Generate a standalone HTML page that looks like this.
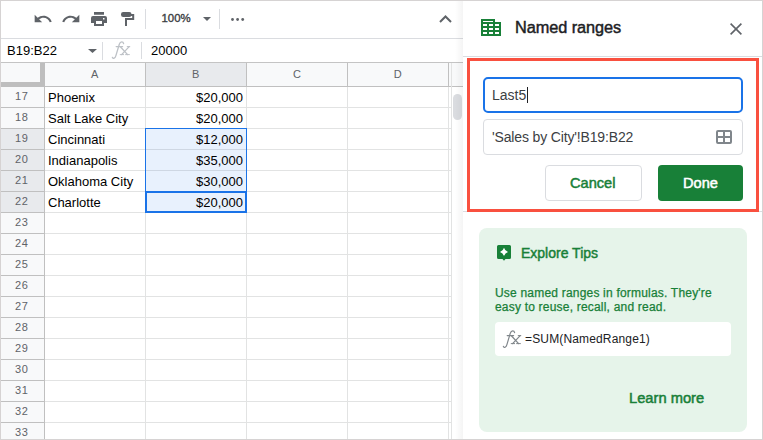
<!DOCTYPE html>
<html><head><meta charset="utf-8">
<style>
*{margin:0;padding:0;box-sizing:border-box}
html,body{width:763px;height:440px;overflow:hidden;background:#fff}
body{position:relative;font-family:"Liberation Sans",sans-serif}
.a{position:absolute}
.t{position:absolute;white-space:nowrap;line-height:1}
.rn{position:absolute;left:0.2px;width:43px;height:20px;line-height:18px;text-align:center;font-size:11px;letter-spacing:0.5px;color:#5f6368}
.ca{position:absolute;left:48px;height:20px;line-height:22px;font-size:13px;color:#000;white-space:nowrap}
.cb{position:absolute;left:146px;width:97px;height:20px;line-height:22px;font-size:13px;color:#000;text-align:right;white-space:nowrap}
</style></head><body>

<!-- ===== toolbar ===== -->
<div class="a" style="left:0;top:38px;width:463px;height:1px;background:#dadce0"></div>
<!-- undo -->
<svg class="a" style="left:33px;top:9px" width="20" height="20" viewBox="0 0 24 24"><path fill="#5f6368" d="M12.5 8c-2.65 0-5.05.99-6.9 2.6L2 7v9h9l-3.62-3.62c1.39-1.16 3.16-1.880 5.12-1.88 3.54 0 6.55 2.31 7.6 5.5l2.37-.78C21.08 11.03 17.15 8 12.5 8z"/></svg>
<!-- redo -->
<svg class="a" style="left:61px;top:9px" width="20" height="20" viewBox="0 0 24 24"><path fill="#5f6368" d="M18.4 10.6C16.55 8.99 14.15 8 11.5 8c-4.65 0-8.58 3.03-9.96 7.22L3.9 16c1.05-3.19 4.05-5.5 7.6-5.5 1.95 0 3.73.72 5.12 1.88L13 16h9V7l-3.6 3.6z"/></svg>
<!-- print -->
<svg class="a" style="left:91px;top:12px" width="16" height="14" viewBox="0 0 16 14"><path fill="#5f6368" d="M3 0h10v2.7H3zM2 4h12a2 2 0 0 1 2 2v5h-3v3H3v-3H0V6a2 2 0 0 1 2-2zM5 9v3h6V9zM12 6v1.5h1.5V6z" fill-rule="evenodd"/></svg>
<!-- paint format -->
<svg class="a" style="left:121px;top:12px" width="14" height="14" viewBox="0 0 14 14"><rect x="0" y="0" width="10.5" height="5" rx="2.2" fill="#5f6368"/><path d="M10 3H12.2V7H5V14" stroke="#5f6368" stroke-width="2" fill="none"/></svg>
<div class="a" style="left:145px;top:9px;width:1px;height:20px;background:#dadce0"></div>
<div class="t" style="left:161.5px;top:13px;font-size:11.4px;-webkit-text-stroke:0.35px #3c4043;color:#3c4043">100%</div>
<svg class="a" style="left:203px;top:17px" width="8" height="4" viewBox="0 0 8 4"><path d="M0 0h8L4 4z" fill="#5f6368"/></svg>
<div class="a" style="left:219px;top:9px;width:1px;height:20px;background:#dadce0"></div>
<svg class="a" style="left:231.3px;top:17.5px" width="14" height="3" viewBox="0 0 14 3"><circle cx="1.5" cy="1.5" r="1.4" fill="#5f6368"/><circle cx="6.6" cy="1.5" r="1.4" fill="#5f6368"/><circle cx="11.7" cy="1.5" r="1.4" fill="#5f6368"/></svg>
<svg class="a" style="left:438.5px;top:15px" width="13" height="8" viewBox="0 0 13 8"><path d="M1 7L6.5 1.5L12 7" stroke="#5f6368" stroke-width="2" fill="none"/></svg>

<!-- ===== formula bar ===== -->
<div class="a" style="left:0;top:62px;width:463px;height:1px;background:#c4c4c4"></div>
<div class="t" style="left:7px;top:44px;font-size:13px;color:#000">B19:B22</div>
<svg class="a" style="left:88px;top:49px" width="9" height="4" viewBox="0 0 9 4"><path d="M0 0h9L4.5 4z" fill="#5f6368"/></svg>
<div class="a" style="left:102px;top:42px;width:1px;height:18px;background:#dadce0"></div>
<svg class="a" style="left:100px;top:38px" width="32" height="24" viewBox="0 0 32 24"><g fill="none" stroke="#bdc1c6" stroke-width="1.3" stroke-linecap="round"><path d="M23.6 5.6C23.2 3.6 20.4 3 19.3 6.2L15.9 17.6C15.1 20.6 13.2 21 12.4 19.4"/><path d="M16.2 8.6H22.6"/><path d="M20.6 9L27.6 16.6M29.2 8.6L21.6 16.6"/><path d="M27.2 8.6H29.8M20.2 16.6H23.6M25.6 16.6H29.4" stroke-width="1"/></g></svg>
<div class="a" style="left:141px;top:42px;width:1px;height:17px;background:#dadce0"></div>
<div class="t" style="left:151px;top:44px;font-size:13px;color:#000">20000</div>

<!-- ===== grid ===== -->
<!-- column header -->
<div class="a" style="left:1px;top:63px;width:462px;height:23px;background:#f8f9fa"></div>
<div class="a" style="left:146px;top:63px;width:100px;height:23px;background:#e8eaed"></div>
<div class="a" style="left:45px;top:86px;width:418px;height:1px;background:#c0c0c0"></div>
<div class="a" style="left:145px;top:63px;width:1px;height:23px;background:#c0c0c0"></div>
<div class="a" style="left:246px;top:63px;width:1px;height:23px;background:#c0c0c0"></div>
<div class="a" style="left:347px;top:63px;width:1px;height:23px;background:#c0c0c0"></div>
<div class="a" style="left:448px;top:63px;width:1px;height:23px;background:#c0c0c0"></div>
<div class="t" style="left:91px;top:69px;font-size:11px;color:#5f6368">A</div>
<div class="t" style="left:192px;top:69px;font-size:11px;color:#5f6368">B</div>
<div class="t" style="left:293px;top:69px;font-size:11px;color:#5f6368">C</div>
<div class="t" style="left:393.7px;top:69px;font-size:11px;color:#5f6368">D</div>
<!-- freeze bars -->
<div class="a" style="left:40px;top:63px;width:5px;height:24px;background:#bebebe"></div>
<div class="a" style="left:1px;top:82px;width:44px;height:5px;background:#bebebe"></div>

<!-- row header -->
<div class="a" style="left:1px;top:87px;width:43px;height:352px;background:#f8f9fa repeating-linear-gradient(to bottom,transparent 0,transparent 20px,#c0c0c0 20px,#c0c0c0 21px)"></div>
<div class="a" style="left:1px;top:129px;width:43px;height:83px;background:#e8eaed repeating-linear-gradient(to bottom,transparent 0,transparent 20px,#c0c0c0 20px,#c0c0c0 21px)"></div>
<div class="a" style="left:44px;top:87px;width:1px;height:352px;background:#c0c0c0"></div>
<!-- cells grid -->
<div class="a" style="left:45px;top:87px;width:406px;height:352px;background:repeating-linear-gradient(to bottom,transparent 0,transparent 20px,#e2e3e3 20px,#e2e3e3 21px)"></div>
<div class="a" style="left:145px;top:87px;width:1px;height:352px;background:#e2e3e3"></div>
<div class="a" style="left:246px;top:87px;width:1px;height:352px;background:#e2e3e3"></div>
<div class="a" style="left:347px;top:87px;width:1px;height:352px;background:#e2e3e3"></div>
<div class="a" style="left:448px;top:87px;width:1px;height:352px;background:#e2e3e3"></div>
<div class="a" style="left:451px;top:63px;width:1px;height:376px;background:#e2e3e3"></div>

<!-- selection -->
<div class="a" style="left:145px;top:128px;width:102px;height:85px;background:rgba(26,115,232,0.1);background-clip:padding-box;border:1px solid #1a73e8"></div>
<div class="a" style="left:145px;top:191px;width:102px;height:22px;border:2px solid #1a73e8"></div>

<!-- row numbers -->
<div class="rn" style="top:87px">17</div>
<div class="rn" style="top:108px">18</div>
<div class="rn" style="top:129px">19</div>
<div class="rn" style="top:150px">20</div>
<div class="rn" style="top:171px">21</div>
<div class="rn" style="top:192px">22</div>
<div class="rn" style="top:213px">23</div>
<div class="rn" style="top:234px">24</div>
<div class="rn" style="top:255px">25</div>
<div class="rn" style="top:276px">26</div>
<div class="rn" style="top:297px">27</div>
<div class="rn" style="top:318px">28</div>
<div class="rn" style="top:339px">29</div>
<div class="rn" style="top:360px">30</div>
<div class="rn" style="top:381px">31</div>
<div class="rn" style="top:402px">32</div>
<div class="rn" style="top:423px">33</div>

<!-- cell texts -->
<div class="ca" style="top:87px">Phoenix</div><div class="cb" style="top:87px">$20,000</div>
<div class="ca" style="top:108px">Salt Lake City</div><div class="cb" style="top:108px">$20,000</div>
<div class="ca" style="top:129px">Cincinnati</div><div class="cb" style="top:129px">$12,000</div>
<div class="ca" style="top:150px">Indianapolis</div><div class="cb" style="top:150px">$35,000</div>
<div class="ca" style="top:171px">Oklahoma City</div><div class="cb" style="top:171px">$30,000</div>
<div class="ca" style="top:192px">Charlotte</div><div class="cb" style="top:192px">$20,000</div>

<div class="a" style="left:453px;top:94px;width:9px;height:26px;background:#dadce0;border-radius:5px"></div>
<!-- ===== side panel ===== -->
<div class="a" style="left:455px;top:1px;width:8px;height:438px;background:linear-gradient(to right,rgba(0,0,0,0),rgba(0,0,0,0.045))"></div>
<div class="a" style="left:463px;top:1px;width:299px;height:438px;background:#fff"></div>
<div class="a" style="left:463px;top:56px;width:299px;height:1px;background:#dadce0"></div>
<div class="a" style="left:463px;top:211px;width:299px;height:1px;background:#dadce0"></div>


<!-- panel header -->
<svg class="a" style="left:481px;top:19px" width="20" height="17" viewBox="0 0 20 17"><path fill="#188038" d="M0 0H14V3H20V17H0Z"/><g fill="#fff"><rect x="2" y="2" width="10" height="1"/><rect x="2" y="5" width="4" height="2"/><rect x="8" y="5" width="4" height="2"/><rect x="14" y="5" width="4" height="2"/><rect x="2" y="9" width="4" height="2"/><rect x="8" y="9" width="4" height="2"/><rect x="14" y="9" width="4" height="2"/><rect x="2" y="13" width="4" height="2"/><rect x="8" y="13" width="4" height="2"/><rect x="14" y="13" width="4" height="2"/></g></svg>
<div class="t" style="left:515px;top:19px;font-size:16.3px;-webkit-text-stroke:0.45px #202124;letter-spacing:-0.05px;color:#202124">Named ranges</div>
<svg class="a" style="left:729px;top:22px" width="14" height="14" viewBox="0 0 14 14"><path d="M1.6 1.6L12.4 12.4M12.4 1.6L1.6 12.4" stroke="#5f6368" stroke-width="1.6"/></svg>

<!-- name input -->
<div class="a" style="left:483px;top:77px;width:260px;height:36px;border:2px solid #1a73e8;border-radius:5px"></div>
<div class="t" style="left:492px;top:88px;font-size:14px;color:#3c4043">Last5</div>
<div class="a" style="left:527px;top:87px;width:1px;height:16px;background:#202124"></div>

<!-- range input -->
<div class="a" style="left:483px;top:119px;width:260px;height:36px;border:1px solid #dadce0;border-radius:4px"></div>
<div class="t" style="left:492px;top:130px;font-size:14px;letter-spacing:-0.15px;color:#3c4043">'Sales by City'!B19:B22</div>
<svg class="a" style="left:716px;top:130px" width="16" height="14" viewBox="0 0 16 14"><path d="M2 0H14A2 2 0 0 1 16 2V12A2 2 0 0 1 14 14H2A2 2 0 0 1 0 12V2A2 2 0 0 1 2 0ZM2 2V6H7V2ZM9 2V6H14V2ZM2 8V12H7V8ZM9 8V12H14V8Z" fill="#80868b" fill-rule="evenodd"/></svg>

<!-- buttons -->
<div class="a" style="left:545px;top:165px;width:97px;height:36px;border:1px solid #dadce0;border-radius:4px"></div>
<div class="t" style="left:570px;top:176px;font-size:14.6px;-webkit-text-stroke:0.5px #188038;color:#188038">Cancel</div>
<div class="a" style="left:658px;top:165px;width:85px;height:36px;background:#188038;border-radius:4px"></div>
<div class="t" style="left:683px;top:176px;font-size:14.6px;-webkit-text-stroke:0.5px #fff;color:#fff">Done</div>

<!-- card -->
<div class="a" style="left:479px;top:228px;width:268px;height:204px;background:#e6f4ea;border-radius:8px"></div>
<svg class="a" style="left:497px;top:245px" width="14" height="16" viewBox="0 0 14 16"><path fill="#188038" d="M1.5 0H12.5A1.5 1.5 0 0 1 14 1.5V12.5A1.5 1.5 0 0 1 12.5 14H8.5L7 15.8L5.5 14H1.5A1.5 1.5 0 0 1 0 12.5V1.5A1.5 1.5 0 0 1 1.5 0Z"/><path fill="#fff" d="M7 2.8Q7.9 6.1 11 7Q7.9 7.9 7 11.2Q6.1 7.9 3 7Q6.1 6.1 7 2.8Z"/></svg>
<div class="t" style="left:521px;top:246px;font-size:14px;-webkit-text-stroke:0.45px #188038;color:#188038">Explore Tips</div>
<div class="a" style="left:495px;top:286px;font-size:12px;line-height:14px;letter-spacing:0.2px;color:#188038;-webkit-text-stroke:0.25px #188038;white-space:nowrap">Use named ranges in formulas. They're<br>easy to reuse, recall, and read.</div>
<div class="a" style="left:495px;top:322px;width:236px;height:34px;background:#fff;border-radius:4px"></div>
<svg class="a" style="left:491px;top:327px" width="32" height="24" viewBox="0 0 32 24"><g fill="none" stroke="#80868b" stroke-width="1.2" stroke-linecap="round"><path d="M23.6 5.6C23.2 3.6 20.4 3 19.3 6.2L15.9 17.6C15.1 20.6 13.2 21 12.4 19.4"/><path d="M16.2 8.6H22.6"/><path d="M20.6 9L27.6 16.6M29.2 8.6L21.6 16.6"/><path d="M27.2 8.6H29.8M20.2 16.6H23.6M25.6 16.6H29.4" stroke-width="1"/></g></svg>
<div class="t" style="left:525px;top:333px;font-size:12px;letter-spacing:0.15px;color:#202124">=SUM(NamedRange1)</div>
<div class="t" style="left:629px;top:391px;font-size:14.7px;-webkit-text-stroke:0.5px #188038;color:#188038">Learn more</div>

<!-- red highlight -->
<div class="a" style="left:467px;top:58px;width:292px;height:154px;border:3px solid #f9503f"></div>

<!-- frame -->
<div class="a" style="left:0;top:0;width:763px;height:1px;background:#d6d3d3"></div>
<div class="a" style="left:0;top:439px;width:763px;height:1px;background:#d6d3d3"></div>
<div class="a" style="left:0;top:0;width:1px;height:440px;background:#d6d3d3"></div>
<div class="a" style="left:762px;top:0;width:1px;height:440px;background:#d6d3d3"></div>
</body></html>
